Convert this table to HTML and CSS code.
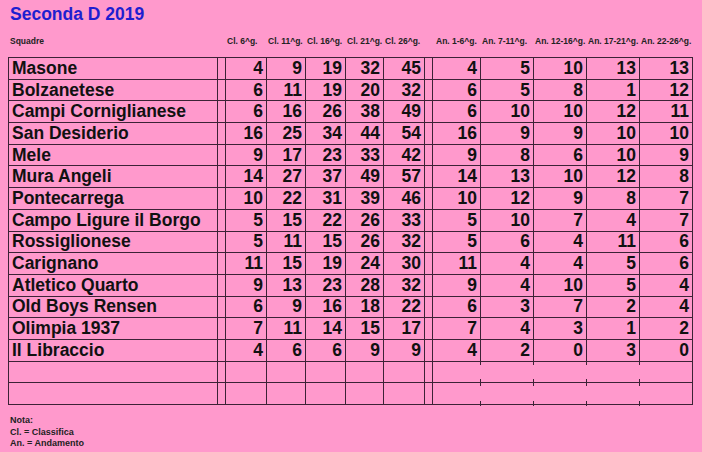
FILE: index.html
```html
<!DOCTYPE html>
<html lang="it">
<head>
<meta charset="utf-8">
<title>Seconda D 2019</title>
<link rel="stylesheet" href="styles.css">
</head>
<body>
<div class="page">
  <h1 class="title">Seconda D 2019</h1>
  <div class="heads">
    <span>Squadre</span><span></span>
    <span>Cl. 6^g.</span><span>Cl. 11^g.</span><span>Cl. 16^g.</span><span>Cl. 21^g.</span><span>Cl. 26^g.</span><span></span>
    <span class="a1">An. 1-6^g.</span><span>An. 7-11^g.</span><span>An. 12-16^g.</span><span>An. 17-21^g.</span><span>An. 22-26^g.</span>
  </div>
  <table class="grid">
    <colgroup>
      <col class="c-name"><col class="c-sp"><col class="c41"><col class="c39"><col class="c40"><col class="c38"><col class="c41"><col class="c-sp"><col class="c48"><col class="c53"><col class="c53"><col class="c53"><col class="c53">
    </colgroup>
    <tbody>
      <tr><td class="name">Masone</td><td></td><td>4</td><td>9</td><td>19</td><td>32</td><td>45</td><td></td><td>4</td><td>5</td><td>10</td><td>13</td><td>13</td></tr>
      <tr><td class="name">Bolzanetese</td><td></td><td>6</td><td>11</td><td>19</td><td>20</td><td>32</td><td></td><td>6</td><td>5</td><td>8</td><td>1</td><td>12</td></tr>
      <tr><td class="name">Campi Corniglianese</td><td></td><td>6</td><td>16</td><td>26</td><td>38</td><td>49</td><td></td><td>6</td><td>10</td><td>10</td><td>12</td><td>11</td></tr>
      <tr><td class="name">San Desiderio</td><td></td><td>16</td><td>25</td><td>34</td><td>44</td><td>54</td><td></td><td>16</td><td>9</td><td>9</td><td>10</td><td>10</td></tr>
      <tr><td class="name">Mele</td><td></td><td>9</td><td>17</td><td>23</td><td>33</td><td>42</td><td></td><td>9</td><td>8</td><td>6</td><td>10</td><td>9</td></tr>
      <tr><td class="name">Mura Angeli</td><td></td><td>14</td><td>27</td><td>37</td><td>49</td><td>57</td><td></td><td>14</td><td>13</td><td>10</td><td>12</td><td>8</td></tr>
      <tr><td class="name">Pontecarrega</td><td></td><td>10</td><td>22</td><td>31</td><td>39</td><td>46</td><td></td><td>10</td><td>12</td><td>9</td><td>8</td><td>7</td></tr>
      <tr><td class="name">Campo Ligure il Borgo</td><td></td><td>5</td><td>15</td><td>22</td><td>26</td><td>33</td><td></td><td>5</td><td>10</td><td>7</td><td>4</td><td>7</td></tr>
      <tr><td class="name">Rossiglionese</td><td></td><td>5</td><td>11</td><td>15</td><td>26</td><td>32</td><td></td><td>5</td><td>6</td><td>4</td><td>11</td><td>6</td></tr>
      <tr><td class="name">Carignano</td><td></td><td>11</td><td>15</td><td>19</td><td>24</td><td>30</td><td></td><td>11</td><td>4</td><td>4</td><td>5</td><td>6</td></tr>
      <tr><td class="name">Atletico Quarto</td><td></td><td>9</td><td>13</td><td>23</td><td>28</td><td>32</td><td></td><td>9</td><td>4</td><td>10</td><td>5</td><td>4</td></tr>
      <tr><td class="name">Old Boys Rensen</td><td></td><td>6</td><td>9</td><td>16</td><td>18</td><td>22</td><td></td><td>6</td><td>3</td><td>7</td><td>2</td><td>4</td></tr>
      <tr><td class="name">Olimpia 1937</td><td></td><td>7</td><td>11</td><td>14</td><td>15</td><td>17</td><td></td><td>7</td><td>4</td><td>3</td><td>1</td><td>2</td></tr>
      <tr><td class="name">Il Libraccio</td><td></td><td>4</td><td>6</td><td>6</td><td>9</td><td>9</td><td></td><td>4</td><td>2</td><td>0</td><td>3</td><td>0</td></tr>
      <tr class="empty"><td class="name"></td><td></td><td></td><td></td><td></td><td></td><td></td><td></td><td class="open-r"></td><td class="open tick"></td><td class="open tick"></td><td class="open tick"></td><td class="open-l tick"></td></tr>
      <tr class="empty"><td class="name"></td><td></td><td></td><td></td><td></td><td></td><td></td><td></td><td class="open-r"></td><td class="open tick"></td><td class="open tick"></td><td class="open tick"></td><td class="open-l tick"></td></tr>
    </tbody>
  </table>
  <div class="note">
    <div>Nota:</div>
    <div>Cl. = Classifica</div>
    <div>An. = Andamento</div>
  </div>
</div>
</body>
</html>
```

FILE: styles.css
```css
html, body {
  margin: 0;
  padding: 0;
  background: #ff99cc;
}

.page {
  width: 702px;
  height: 452px;
  box-sizing: border-box;
  padding: 0 10px 0 8px;
  font-family: "Liberation Sans", Arial, sans-serif;
  color: #141014;
  overflow: hidden;
}

.title {
  margin: 0;
  padding: 3px 0 0 2px;
  font-size: 17.5px;
  line-height: 22px;
  font-weight: bold;
  color: #1e1ed0;
}

.heads {
  display: grid;
  grid-template-columns: 209px 8px 41px 39px 40px 38px 41px 8px 48px 53px 53px 53px 53px;
  margin-top: 10px;
  height: 12px;
  font-size: 8.5px;
  line-height: 12px;
  font-weight: bold;
  color: #222;
}

.heads span {
  padding-left: 2px;
  white-space: nowrap;
}

.heads .a1 {
  padding-left: 4px;
}

.grid {
  margin-top: 10px;
  width: 684px;
  table-layout: fixed;
  border-collapse: collapse;
  font-size: 17.5px;
  font-weight: bold;
  color: #111;
}

.c-name { width: 209px; }
.c-sp { width: 8px; }
.c38 { width: 38px; }
.c39 { width: 39px; }
.c40 { width: 40px; }
.c41 { width: 41px; }
.c48 { width: 48px; }
.c53 { width: 53px; }

.grid tr {
  height: 21.7px;
}

.grid td {
  border: 1px solid #3c2236;
  padding: 0 3px 0 0;
  text-align: right;
  line-height: 19px;
  white-space: nowrap;
  overflow: hidden;
}

.grid td.name {
  text-align: left;
  padding: 0 0 0 3px;
}

.grid td.open {
  border-left-style: hidden;
  border-right-style: hidden;
}

.grid td.open-r {
  border-right-style: hidden;
}

.grid td.open-l {
  border-left-style: hidden;
}

.grid td.tick {
  position: relative;
  overflow: visible;
}

.grid td.tick::before,
.grid td.tick::after {
  content: "";
  position: absolute;
  left: -1px;
  width: 1px;
  height: 5px;
  background: #3c2236;
}

.grid td.tick::before { top: -2px; }
.grid td.tick::after { bottom: -2px; }

.note {
  margin-top: 10px;
  padding-left: 2px;
  font-size: 9px;
  line-height: 11.5px;
  font-weight: bold;
  color: #222;
}
```
